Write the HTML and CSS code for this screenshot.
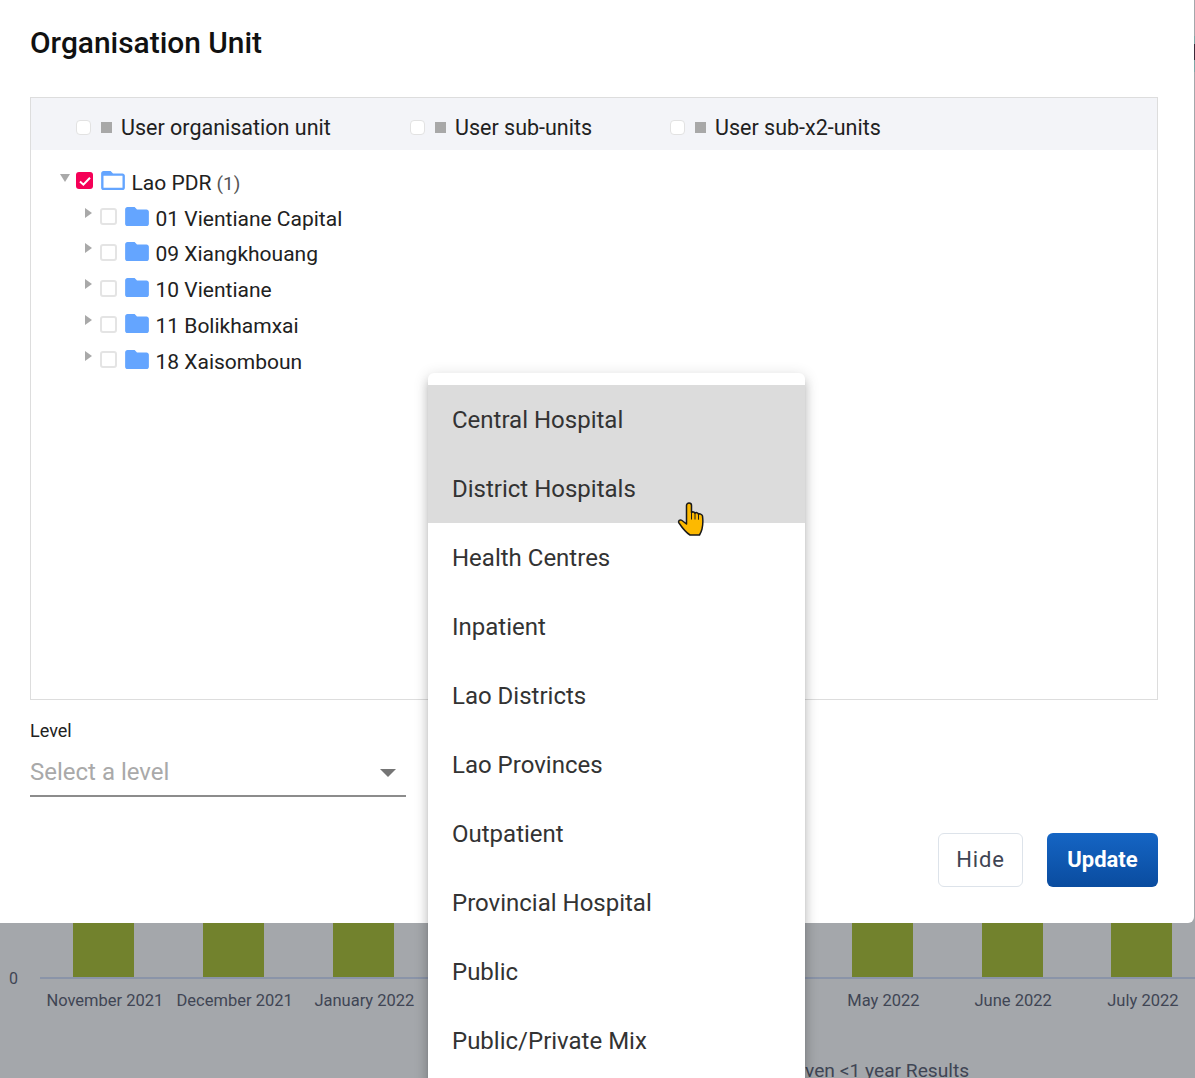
FILE: index.html
```html
<!DOCTYPE html>
<html lang="en">
<head>
    <meta charset="UTF-8">
    <title>Organisation Unit</title>
    <link rel="stylesheet" href="styles.css">
</head>
<body>

<!-- Dialog -->
<div class="dialog">
    <h1 class="dialog-title">Organisation Unit</h1>

    <div class="tree-box">
        <div class="user-bar">
            <div class="user-opt opt-a"><span class="mini-check"></span><span class="mini-square"></span>User organisation unit</div>
            <div class="user-opt opt-b"><span class="mini-check"></span><span class="mini-square"></span>User sub-units</div>
            <div class="user-opt opt-c"><span class="mini-check"></span><span class="mini-square"></span>User sub-x2-units</div>
        </div>
        <ul class="tree">
            <li class="tree-row root">
                <span class="arrow-down"></span>
                <span class="check checked">
                    <svg viewBox="0 0 18 18" width="18" height="18"><path d="M4 9.500l3.400 3.200L14 5.800" fill="none" stroke="#fff" stroke-width="2"/></svg>
                </span>
                <svg class="folder" viewBox="2 4 20 16" width="24" height="19"><path fill="#64a5ff" d="M20 6h-8l-2-2H4c-1.100 0-1.990.900-1.990 2L2 18c0 1.100.900 2 2 2h16c1.100 0 2-.900 2-2V8c0-1.100-.900-2-2-2zm0 12H4V8h16v10z"/></svg>
                <span class="name">Lao PDR <span class="count">(1)</span></span>
            </li>
            <li class="tree-row child"><span class="arrow-right"></span><span class="check"></span><svg class="folder" viewBox="2 4 20 16" width="24" height="19"><path fill="#64a5ff" d="M10 4H4c-1.100 0-1.990.900-1.990 2L2 18c0 1.100.900 2 2 2h16c1.100 0 2-.900 2-2V8c0-1.100-.900-2-2-2h-8l-2-2z"/></svg><span class="name">01 Vientiane Capital</span></li>
            <li class="tree-row child"><span class="arrow-right"></span><span class="check"></span><svg class="folder" viewBox="2 4 20 16" width="24" height="19"><path fill="#64a5ff" d="M10 4H4c-1.100 0-1.990.900-1.990 2L2 18c0 1.100.900 2 2 2h16c1.100 0 2-.900 2-2V8c0-1.100-.900-2-2-2h-8l-2-2z"/></svg><span class="name">09 Xiangkhouang</span></li>
            <li class="tree-row child"><span class="arrow-right"></span><span class="check"></span><svg class="folder" viewBox="2 4 20 16" width="24" height="19"><path fill="#64a5ff" d="M10 4H4c-1.100 0-1.990.900-1.990 2L2 18c0 1.100.900 2 2 2h16c1.100 0 2-.900 2-2V8c0-1.100-.900-2-2-2h-8l-2-2z"/></svg><span class="name">10 Vientiane</span></li>
            <li class="tree-row child"><span class="arrow-right"></span><span class="check"></span><svg class="folder" viewBox="2 4 20 16" width="24" height="19"><path fill="#64a5ff" d="M10 4H4c-1.100 0-1.990.900-1.990 2L2 18c0 1.100.900 2 2 2h16c1.100 0 2-.900 2-2V8c0-1.100-.900-2-2-2h-8l-2-2z"/></svg><span class="name">11 Bolikhamxai</span></li>
            <li class="tree-row child"><span class="arrow-right"></span><span class="check"></span><svg class="folder" viewBox="2 4 20 16" width="24" height="19"><path fill="#64a5ff" d="M10 4H4c-1.100 0-1.990.900-1.990 2L2 18c0 1.100.900 2 2 2h16c1.100 0 2-.900 2-2V8c0-1.100-.900-2-2-2h-8l-2-2z"/></svg><span class="name">18 Xaisomboun</span></li>
        </ul>
    </div>

    <div class="level-field">
        <div class="level-label">Level</div>
        <div class="level-select">Select a level<span class="select-arrow"></span></div>
    </div>

    <div class="dialog-actions">
        <button class="btn btn-hide">Hide</button>
        <button class="btn btn-update">Update</button>
    </div>
</div>

<!-- Chart behind the dialog -->
<div class="chart">
    <div class="chart-plot">
        <span class="zero">0</span>
        <div class="bars">
            <div class="bar-col"><div class="bar"></div></div>
            <div class="bar-col"><div class="bar"></div></div>
            <div class="bar-col"><div class="bar"></div></div>
            <div class="bar-col"><div class="bar"></div></div>
            <div class="bar-col"><div class="bar"></div></div>
            <div class="bar-col"><div class="bar"></div></div>
            <div class="bar-col"><div class="bar"></div></div>
            <div class="bar-col"><div class="bar"></div></div>
            <div class="bar-col"><div class="bar"></div></div>
        </div>
    </div>
    <div class="months">
        <span>November 2021</span>
        <span>December 2021</span>
        <span>January 2022</span>
        <span></span>
        <span></span>
        <span></span>
        <span>May 2022</span>
        <span>June 2022</span>
        <span>July 2022</span>
    </div>
    <div class="chart-caption">ven &lt;1 year Results</div>
</div>

<div class="edge-mark"></div>

<!-- Dropdown menu -->
<ul class="menu">
    <li class="menu-item selected">Central Hospital</li>
    <li class="menu-item selected">District Hospitals</li>
    <li class="menu-item">Health Centres</li>
    <li class="menu-item">Inpatient</li>
    <li class="menu-item">Lao Districts</li>
    <li class="menu-item">Lao Provinces</li>
    <li class="menu-item">Outpatient</li>
    <li class="menu-item">Provincial Hospital</li>
    <li class="menu-item">Public</li>
    <li class="menu-item">Public/Private Mix</li>
</ul>

<svg class="cursor" viewBox="0 0 28 36" width="28" height="36">
    <path fill="#fdb900" stroke="#1a1a1a" stroke-width="1.500" stroke-linejoin="round" d="M9.500 3.500a2.500 2.500 0 0 1 5 0V10.500c1-1 3-.800 3.500.700 1-1 3-.700 3.500 1 1-.700 3.500-.200 4 1.800.500 4 .500 9-.500 13-.600 2.400-1.500 4.300-2.500 6H13c-4-2.500-8-7.500-11-12-1.200-2 1-4 3-2.500l4.500 3.500z"/>
    <path fill="none" stroke="#1a1a1a" stroke-width="1" d="M14.500 10.500v7M18 11.200v6.300M21.500 12.700v5"/>
</svg>

</body>
</html>
```

FILE: styles.css
```css
* {
    box-sizing: border-box;
}
html, body {
    margin: 0;
    height: 1078px;
    overflow: hidden;
}
body {
    position: relative;
    background-color: #a4a7ab;
    font-family: Roboto, sans-serif;
    color: #212121;
}
ul {
    list-style: none;
    margin: 0;
    padding: 0;
}

/* dialog */
.dialog {
    width: 1194px;
    height: 923px;
    padding: 0 36px 0 30px;
    background: #fff;
    border-bottom-right-radius: 6px;
}
.dialog-title {
    margin: 0;
    padding-top: 25px;
    height: 97px;
    font-size: 29.9px;
    line-height: 36px;
    font-weight: 500;
    color: #111;
}
.tree-box {
    height: 603px;
    border: 1px solid #ddd;
}
.user-bar {
    display: flex;
    height: 52px;
    padding-top: 6px;
    background: #f3f4f8;
    font-size: 21.5px;
}
.user-opt {
    display: flex;
    align-items: center;
}
.opt-a { margin-left: 45px; width: 334px; }
.opt-b { width: 260px; }
.mini-check {
    width: 15px;
    height: 15px;
    margin-right: 10px;
    background: #fff;
    border: 1px solid #e2e2e2;
    border-radius: 4px;
}
.mini-square {
    width: 11px;
    height: 11px;
    margin-right: 9px;
    background: #a8a8a8;
}
.tree {
    padding-top: 15px;
}
.tree-row {
    display: flex;
    align-items: center;
    height: 35.8px;
    font-size: 21px;
}
.root { padding-left: 29px; }
.child { padding-left: 53px; }
.arrow-down {
    width: 0;
    height: 0;
    margin: -9px 6px 0 0;
    border-left: 5px solid transparent;
    border-right: 5px solid transparent;
    border-top: 8px solid #a9a9a9;
}
.arrow-right {
    width: 0;
    height: 0;
    margin: -12px 8px 0 1px;
    border-top: 5px solid transparent;
    border-bottom: 5px solid transparent;
    border-left: 7px solid #a9a9a9;
}
.check {
    display: block;
    width: 17px;
    height: 17px;
    margin: -4px 8px 0 0;
    background: #fff;
    border: 2px solid #e4e4e4;
    border-radius: 3px;
}
.check.checked {
    background: #f50057;
    border: 0;
}
.check svg {
    display: block;
}
.folder {
    margin: -5px 6.5px 0 0;
}
.count {
    font-size: 19px;
    color: #555;
}

/* level select */
.level-field {
    width: 376px;
    padding-top: 20px;
}
.level-label {
    font-size: 18px;
    line-height: 21px;
}
.level-select {
    display: flex;
    justify-content: space-between;
    align-items: center;
    height: 46px;
    margin-top: 10px;
    padding: 0 10px 2px 0;
    font-size: 24px;
    color: #a9a9a9;
    border-bottom: 2px solid #8c8c8c;
}
.select-arrow {
    width: 0;
    height: 0;
    margin-top: 1px;
    border-left: 8px solid transparent;
    border-right: 8px solid transparent;
    border-top: 8px solid #757575;
}

/* buttons */
.dialog-actions {
    display: flex;
    justify-content: flex-end;
    gap: 24px;
    margin-top: 36px;
}
.btn {
    height: 54px;
    padding-bottom: 2px;
    border-radius: 6px;
    font-family: Roboto, sans-serif;
    font-size: 22px;
}
.btn-hide {
    width: 85px;
    background: #fff;
    border: 1px solid #dde3ea;
    color: #3f4554;
    letter-spacing: .9px;
}
.btn-update {
    width: 111px;
    border: 0;
    background: linear-gradient(#1565c4, #0a4c9f);
    color: #fff;
    font-weight: 700;
}

/* chart */
.chart {
    color: #3f4554;
}
.chart-plot {
    position: relative;
    height: 56px;
    padding-left: 40px;
}
.zero {
    position: absolute;
    left: 9px;
    top: 46px;
    font-size: 16px;
}
.bars {
    display: grid;
    grid-template-columns: repeat(9, 129.75px);
    height: 56px;
    border-bottom: 2px solid #8a94a8;
}
.bar-col {
    display: flex;
    justify-content: center;
    padding-right: 2px;
}
.bar {
    width: 61px;
    height: 54px;
    background: #72822d;
}
.months {
    display: grid;
    grid-template-columns: repeat(9, 129.75px);
    padding: 12px 0 0 40px;
    font-size: 16.5px;
    line-height: 20px;
    text-align: center;
}
.chart-caption {
    margin-top: 48px;
    padding-left: 805px;
    font-size: 19.2px;
    line-height: 24px;
}
.edge-mark {
    position: absolute;
    top: 36px;
    right: 0;
    width: 1px;
    height: 36px;
    background: linear-gradient(#7fa6a6 22%, #3a2b3a 22%, #3a2b3a 67%, #7fa6a6 67%);
}

/* dropdown */
.menu {
    position: absolute;
    left: 428px;
    top: 373px;
    width: 377px;
    padding: 12px 0 40px;
    background: #fff;
    border-radius: 6px;
    box-shadow: 0 5px 5px -3px rgba(0,0,0,.2), 0 8px 10px 1px rgba(0,0,0,.14), 0 3px 14px 2px rgba(0,0,0,.12);
}
.menu-item {
    height: 69px;
    padding: 1px 24px 0;
    font-size: 24px;
    line-height: 69px;
    color: #333;
}
.menu-item.selected {
    background: #dcdcdc;
}
.cursor {
    position: absolute;
    left: 677px;
    top: 502px;
}
```
